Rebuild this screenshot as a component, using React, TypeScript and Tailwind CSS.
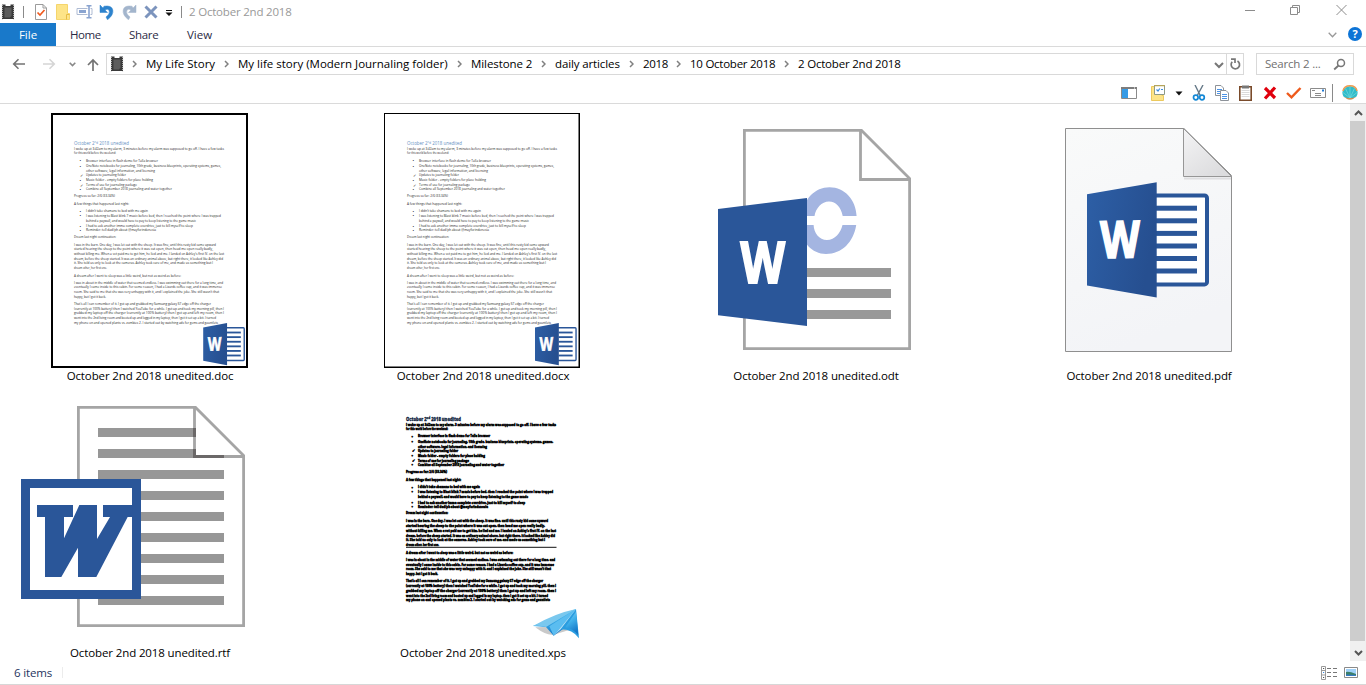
import React from "react";

type Line = [number, number, number, string, string?];

const LINES: Line[] = [
  [74, 149, 224, "I woke up at 3:42am to my alarm, 3 minutes before my alarm was supposed to go off. I have a few tasks"],
  [74, 153.3, 116, "for this world before the weekend:"],
  [86, 160.5, 158, "Browser interface in flash demo for Talla browser", "•"],
  [86, 166, 221, "OneNote notebooks for journaling, 10th grade, business blueprints, operating systems, games,", "•"],
  [86, 170.8, 155, "other software, legal information, and licensing"],
  [86, 175, 126, "Updates to journaling folder", "✓"],
  [86, 180, 153, "Music folder - empty folders for place holding", "•"],
  [86, 185, 137, "Terms of use for journaling package", "✓"],
  [86, 189, 172, "Combine all September 2018 journaling and water together", "•"],
  [74, 196, 115, "Progress so far: 2/6 (33.34%)"],
  [74, 204, 129, "A few things that happened last night:"],
  [86, 211, 148, "I didn't take shamans to bed with me again", "•"],
  [86, 215.6, 221, "I was listening to Blast blink 7 music before bed, then I reached the point where I was trapped", "•"],
  [86, 220.5, 196, "behind a paywall, and would have to pay to keep listening to the game music"],
  [86, 226, 193, "I had to ask another imma complete overdrive, just to kill myself to sleep", "•"],
  [86, 230, 156, "Reminder: tell dad/ph about @mayforindonesia", "•"],
  [74, 236.5, 116, "Dream last night continuation:"],
  [74, 244.5, 216, "I was in the barn. One day, I was let out with the sheep. It was fine, until this rusty kid came upward"],
  [74, 249, 213, "started hearing the sheep to the point where it was cut open, then head me open really badly,"],
  [74, 253.8, 224, "without killing me. When a vet paid me to get him, he lied and me. I landed on Ashley's first IV. on the last"],
  [74, 258.6, 223, "dream, before the sheep started. It was an ordinary animal above, but right there, it looked like Ashley did"],
  [74, 263.4, 213, "it. She told us only to look at the cameras. Ashley took care of me, and made us something but I"],
  [74, 268, 107, "dream other, her first one."],
  [74, 275.5, 181, "A dream after I went to sleep was a little weird, but not as weird as before:"],
  [74, 283, 223, "I was in about in the middle of water that seemed endless. I was swimming out there for a long time, and"],
  [74, 287.4, 222, "eventually I came inside to this cabin. For some reason, I had a Lizards coffee cup, and it was immense"],
  [74, 292, 219, "room. She said to me that she was very unhappy with it, and I explained the joke. She still wasn't that"],
  [74, 297, 106, "happy, but I got it back."],
  [74, 304, 211, "That's all I can remember of it. I got up and grabbed my Samsung galaxy S7 edge off the charger"],
  [74, 308.5, 224, "(currently at 100% battery) then I watched YouTube for a while. I got up and took my morning pill, then I"],
  [74, 313.2, 224, "grabbed my laptop off the charger (currently at 100% battery) then I got up and left my room, then I"],
  [74, 318, 216, "went into the 2nd living room and booted up and logged in my laptop, then I got it set up a bit. I turned"],
  [74, 322.6, 218, "my phone on and opened plants vs. zombies 2. I started out by watching ads for gems and gauntlets"],
];

function PageText({ dark = false }: { dark?: boolean }) {
  const ink = dark ? "#000" : "#1c1c1c";
  return (
    <g fontFamily="'Open Sans', 'Noto Sans', sans-serif" fontSize={dark ? 3.7 : 4.3} fill={ink}
      fontWeight={dark ? 800 : 400} stroke={dark ? "#000" : "none"} strokeWidth={dark ? 0.5 : 0}>
      <text x={74} y={145.3} textLength={55} lengthAdjust="spacingAndGlyphs" fontSize={5.4}
        fill={dark ? "#10233f" : "#5f90bf"} stroke={dark ? "#10233f" : "none"} strokeWidth={0.3}>October 2ⁿᵈ 2018 unedited</text>
      {LINES.map(([x, y, right, text, mark]) => (
        <React.Fragment key={y}>
          {mark && <text x={79.6} y={y + 1.5}>{mark}</text>}
          <text x={x} y={y + (dark ? 1.3 : 1)} textLength={right - x} lengthAdjust="spacingAndGlyphs">{text}</text>
        </React.Fragment>
      ))}
    </g>
  );
}

/* Word emblem, 122 x 115 units */
function WordMark({ id }: { id: string }) {
  return (
    <g>
      <defs>
        <linearGradient id={id} x1="0" y1="0" x2="1" y2="0.3">
          <stop offset="0" stopColor="#2d5fa6" />
          <stop offset="1" stopColor="#264f90" />
        </linearGradient>
      </defs>
      <rect x="60" y="13.2" width="60" height="89" rx="2.5" fill="#fff" stroke="#2a5699" strokeWidth="4" />
      {[26, 38.6, 51.2, 63.8, 76.3, 88.8].map((y) => (
        <rect key={y} x="69" y={y - 2.5} width="41" height="5" fill="#2a5699" />
      ))}
      <path d="M0 12 69.7 0V115.3L0 103.3Z" fill={`url(#${id})`} />
      <text x="13.5" y="75.5" fontFamily="'Open Sans', sans-serif" fontWeight="700" fontSize="51" fill="#fff"
        textLength="39.500" lengthAdjust="spacingAndGlyphs" stroke="#fff" strokeWidth="1.800" transform="rotate(-1 33 58)">W</text>
    </g>
  );
}

const Canvas = ({ children }: { children: React.ReactNode }) => (
  <svg width="300" height="263" viewBox="0 0 300 263" className="block shrink-0 overflow-visible">{children}</svg>
);

const DocThumb = () => (
  <Canvas>
    <rect x="52" y="10" width="195" height="253" fill="#fff" stroke="#000" strokeWidth="2" />
    <g transform="translate(0 -104)"><PageText /></g>
    <g transform="translate(203.2 219) scale(.342 .366)"><WordMark id="wm-doc" /></g>
  </Canvas>
);

const DocxThumb = () => (
  <Canvas>
    <path d="M51 9H247V264H51ZM52 10V262.500H245.500V10Z" fill="#000" fillRule="evenodd" />
    <g transform="translate(0 -104)"><PageText /></g>
    <g transform="translate(202 219) scale(.342 .366)"><WordMark id="wm-docx" /></g>
  </Canvas>
);

const OdtThumb = () => (
  <Canvas>
    <g transform="translate(-666 -104)">
      <path d="M744.4 130.4H861.500L909.600 178.600V348.600H744.400Z" fill="#fff" stroke="#a5a5a5" strokeWidth="2.8" />
      <path d="M860.500 130V179.500H910" fill="none" stroke="#a5a5a5" strokeWidth="2.8" />
      <path d="M802.500 216C803 199 815 187.200 829.500 187.200C845 187.200 856 200 856.600 216H842.700C841 207 836 201.500 829 201.500C821.500 201.500 816 208 814.500 216Z" fill="#a4b5e1" />
      <path d="M800 225H813.600C814 233 819 240 827 240C835 240 840.500 233 842.500 225H856.200C853.500 242 842 254 826 254C812 254 801 242 800 225Z" fill="#a4b5e1" />
      <path d="M807 268h84v9h-84zM807 289h84v9h-84zM807 310h84v9h-84z" fill="#999" />
      <path d="M718 209 807 198V326L718 315.300Z" fill="#2a5699" />
      <text x="740.5" y="282.5" fontFamily="'Open Sans', sans-serif" fontWeight="700" fontSize="57.500" fill="#fff" stroke="#fff" strokeWidth="2"
        textLength="44.500" lengthAdjust="spacingAndGlyphs">W</text>
    </g>
  </Canvas>
);

const PdfThumb = () => (
  <Canvas>
    <defs>
      <linearGradient id="pdf-page" x1="0" y1="0" x2=".3" y2="1">
        <stop offset="0" stopColor="#f9fafa" /><stop offset="1" stopColor="#f3f4f7" />
      </linearGradient>
      <linearGradient id="pdf-fold" x1="0" y1="0" x2=".7" y2="1">
        <stop offset="0" stopColor="#f4f4f5" /><stop offset="1" stopColor="#dcdcde" />
      </linearGradient>
    </defs>
    <g transform="translate(-999 -104)">
      <path d="M1065.500 128.500H1184L1231.500 175.500V351.500H1065.500Z" fill="url(#pdf-page)" stroke="#8f8f8f" />
      <path d="M1184 178.500h47" stroke="#dedee0" strokeWidth="2" />
      <path d="M1183.500 128.500V176.500H1231.500Z" fill="url(#pdf-fold)" stroke="#969696" />
      <g transform="translate(1087 182.200)"><WordMark id="wm-pdf" /></g>
    </g>
  </Canvas>
);

const RtfThumb = () => (
  <Canvas>
    <g transform="translate(0 -381)">
      <path d="M78.400 407.400H195.500L243.600 455.500V625.600H78.400Z" fill="#fff" stroke="#a5a5a5" strokeWidth="2.8" />
      <path d="M194.500 407V456.500H244" fill="none" stroke="#a5a5a5" strokeWidth="2.8" />
      <path d="M98 428h98v9h-98zM98 449h98v9h-98z" fill="#979797" />
      {[470, 491, 512, 533, 554, 575, 596].map((y) => <rect key={y} x="98" y={y} width="126" height="9" fill="#979797" />)}
      <path d="M193 428h3v9h-3zM193 449h3v6h28v3h-31z" fill="#6b6868" />
      <rect x="25.500" y="483.500" width="111" height="111" fill="#fff" stroke="#2a5699" strokeWidth="9" />
      <path transform="translate(0 395) scale(.33333)" fill="#2a5699"
        d="M111 330H219V366H192V430L238 330H291V432L330 366H309V330H398V366H383L289 546H234V458L184 546H135V366H111Z" />
    </g>
  </Canvas>
);

const XpsThumb = () => (
  <Canvas>
    <defs>
      <linearGradient id="plane" x1="0" y1="0" x2="0.4" y2="1">
        <stop offset="0" stopColor="#8fd4f5" /><stop offset=".5" stopColor="#3fb0ea" /><stop offset="1" stopColor="#1478c8" />
      </linearGradient>
    </defs>
    <g transform="translate(-1 38) scale(1 1.01) translate(0 -143.500)"><PageText dark /></g>
    <path d="M73 166.300H223.500" stroke="#111" strokeWidth="1" />
    <g transform="translate(57 149) scale(.33333)">
      <path d="M436 292Q470 318 491 314L545 298 500 290Z" fill="#c9c9c9" />
      <path d="M429 288 558 237 520 296 491 317 468 291Z" fill="url(#plane)" />
      <path d="M429 288Q495 250 558 237L468 291Q448 285 429 288Z" fill="#7ac8ee" />
      <path d="M558 237 567 325Q548 298 512 298Z" fill="#2a9de0" />
      <path d="M558 237 491 317 478 289Z" fill="#5bbdf0" />
      <path d="M558 237 491 317 512 298Z" fill="#b8e4f8" />
      <path d="M558 245 565 316Q550 296 526 292Z" fill="url(#plane)" />
    </g>
  </Canvas>
);

const FILES = [
  { name: "October 2nd 2018 unedited.doc", Thumb: DocThumb },
  { name: "October 2nd 2018 unedited.docx", Thumb: DocxThumb },
  { name: "October 2nd 2018 unedited.odt", Thumb: OdtThumb },
  { name: "October 2nd 2018 unedited.pdf", Thumb: PdfThumb },
  { name: "October 2nd 2018 unedited.rtf", Thumb: RtfThumb },
  { name: "October 2nd 2018 unedited.xps", Thumb: XpsThumb },
];

const Chip = ({ className = "" }: { className?: string }) => (
  <svg width="14" height="16" viewBox="0 0 14 16" className={`shrink-0 ${className}`}>
    <path d="M1 .5H4.500V2H9.500V.5H13V15H1Z" fill="#3a3a3a" />
    <path d="M3.500 3.500H10.500V11.500L9 13.500H3.500Z" fill="#5c5c5c" />
    <path d="M1.300 1V15.500M12.700 1V15.500" stroke="#c4c4c4" strokeWidth="1" strokeDasharray="1 1" />
  </svg>
);

const Sep = ({ className = "" }: { className?: string }) => <span className={`w-px shrink-0 bg-[#8a8a8a] ${className}`} />;

const Chevron = () => (
  <span className="flex w-[23px] shrink-0 items-center justify-center">
    <svg width="5" height="8" viewBox="0 0 5 8"><path d="M1 1 4 4 1 7" fill="none" stroke="#808080" strokeWidth="1.500" /></svg>
  </span>
);

function TitleBar() {
  return (
    <div className="flex h-[23px] items-center">
      <Chip className="ml-[1px]" />
      <Sep className="ml-[8px] h-3" />
      <svg width="14" height="16" viewBox="0 0 14 16" className="ml-[10px] shrink-0">
        <path d="M1.500.5H9L12.500 4V15.500H1.500Z" fill="#fff" stroke="#9b9b9b" /><path d="M9 .5V4h3.500" fill="none" stroke="#9b9b9b" />
        <path d="M3.500 8.500 6 11 10.500 6" fill="none" stroke="#f05a1e" strokeWidth="1.700" />
      </svg>
      <svg width="14" height="16" viewBox="0 0 14 16" className="ml-[8px] shrink-0">
        <path d="M.5.5H11.500V9.500H13.500V15.500H.5Z" fill="#fde488" stroke="#f5d56c" /><path d="M10.500 15.500V10.500H13.500" fill="none" stroke="#e7bd45" />
      </svg>
      <svg width="17" height="14" viewBox="0 0 17 14" className="ml-[6px] shrink-0">
        <path d="M11.500 3.500H1V9.500H11.500M14.500 3.500H16V9.500H14.500" fill="#fff" stroke="#aebbd3" />
        <path d="M3 5H10V8H3Z" fill="#8aa4d0" /><path d="M10.500.8H15.500M13 .8V12.800M10.500 12.800H15.500" stroke="#8aa4d0" strokeWidth="1.600" />
      </svg>
      <svg width="15" height="16" viewBox="0 0 15 16" className="ml-[6px] shrink-0">
        <path d="M1 1V8.500H8.500L6 6Q9.500 4 10.300 7T7 13L8.500 15.800Q14.800 11 13.800 6T5 2.200L4 4Z" fill="#2d83cd" stroke="#2d83cd" strokeWidth=".5" />
      </svg>
      <svg width="15" height="16" viewBox="0 0 15 16" className="ml-[8px] shrink-0">
        <path transform="matrix(-1 0 0 1 15 0)" d="M1 1V8.500H8.500L6 6Q9.500 4 10.300 7T7 13L8.500 15.800Q14.800 11 13.800 6T5 2.200L4 4Z" fill="#a3b5cc" stroke="#a3b5cc" strokeWidth=".5" />
      </svg>
      <svg width="15" height="14" viewBox="0 0 15 14" className="ml-[7px] shrink-0">
        <path d="M1.500 1.500 12.500 12.500M12.500 1.500 1.500 12.500" stroke="#7c94bd" strokeWidth="3" />
      </svg>
      <svg width="8" height="6" viewBox="0 0 8 6" className="ml-[6px] mt-[2px] shrink-0">
        <path d="M1 0H7V1H1ZM.5 2.500H7.500L4 6Z" fill="#111" />
      </svg>
      <Sep className="ml-[8px] h-3" />
      <span className="ml-[7px] tracking-[-0.2px] text-[#999]">2 October 2nd 2018</span>
      <svg width="102" height="12" viewBox="0 0 102 12" className="ml-auto mr-[19px] shrink-0 -translate-y-[2px]" fill="none" stroke="#8c8c8c">
        <path d="M0 6.500H10" /><path d="M45.500 3.500H52.500V10.500H45.500ZM47.500 3.500V1.500H54.500V8.500H52.500" /><path d="M91.500 1 101.500 11M101.500 1 91.500 11" />
      </svg>
    </div>
  );
}

function Tabs() {
  return (
    <div className="flex h-[24px] items-center border-b border-[#dadada] text-[#2b2b45]">
      <div className="flex h-[23px] w-[56px] items-center justify-center bg-[#1979ca] text-white">File</div>
      <div className="ml-[14px] w-[59px] tracking-[-0.4px]">Home</div>
      <div className="w-[58px] tracking-[-0.3px]">Share</div>
      <div>View</div>
      <svg width="9" height="6" viewBox="0 0 9 6" className="ml-auto mr-[11px]"><path d="M.7.7 4.500 4.700 8.300.7" fill="none" stroke="#999" strokeWidth="1.300" /></svg>
      <span className="mr-[4px] flex size-[14px] -translate-y-px items-center justify-center rounded-full bg-[#0d74d6] text-[11px] font-bold leading-none text-white">?</span>
    </div>
  );
}

const CRUMBS: [string, string][] = [
  ["My Life Story", "w-[69px]"],
  ["My life story (Modern Journaling folder)", "w-[210px]"],
  ["Milestone 2", "w-[61px] tracking-[-0.08px]"],
  ["daily articles", "w-[65px] tracking-[-0.12px]"],
  ["2018", "w-[24px] tracking-[-0.3px]"],
  ["10 October 2018", "w-[85px] tracking-[-0.25px]"],
  ["2 October 2nd 2018", "w-[102px] tracking-[-0.2px]"],
];

function AddressBar() {
  return (
    <div className="flex h-[34px] items-center">
      <svg width="14" height="12" viewBox="0 0 14 12" className="ml-[12px] shrink-0"><path d="M13 6H2M6.500 1.200 1.700 6 6.500 10.800" fill="none" stroke="#737373" strokeWidth="1.600" /></svg>
      <svg width="14" height="12" viewBox="0 0 14 12" className="ml-[16px] shrink-0"><path d="M1 6H12M7.500 1.200 12.300 6 7.500 10.800" fill="none" stroke="#d5d5d5" strokeWidth="1.600" /></svg>
      <svg width="7" height="5" viewBox="0 0 7 5" className="ml-[13px] shrink-0"><path d="M.7.7 3.500 3.500 6.300.7" fill="none" stroke="#888" strokeWidth="1.600" /></svg>
      <svg width="14" height="13" viewBox="0 0 14 13" className="ml-[10px] shrink-0"><path d="M7 13V2M2 7 7 2 12 7" fill="none" stroke="#737373" strokeWidth="1.700" /></svg>
      <div className="ml-[6px] flex h-[22px] w-[1138px] shrink-0 items-center border border-[#d9d9d9]">
        <Chip className="ml-[3px]" />
        {CRUMBS.map(([label, cls], i) => (
          <React.Fragment key={label}>
            {i === 0 ? <span className="-ml-px flex"><Chevron /></span> : <Chevron />}
            <span className={`shrink-0 whitespace-nowrap ${cls}`}>{label}</span>
          </React.Fragment>
        ))}
        <svg width="10" height="7" viewBox="0 0 10 7" className="ml-auto mr-[2px] mt-[2px]"><path d="M1 1 5 5 9 1" fill="none" stroke="#777" strokeWidth="2" /></svg>
        <span className="flex h-full w-[17px] items-center justify-center border-l border-[#d9d9d9]">
          <svg width="11" height="12" viewBox="0 0 11 12"><path d="M2.200 3.800A4.200 4.200 0 1 0 7.500 3M1 1.200H5V5" fill="none" stroke="#777" strokeWidth="1.700" /></svg>
        </span>
      </div>
      <div className="ml-[12px] flex h-[22px] w-[98px] shrink-0 items-center border border-[#d9d9d9] pl-[8px] text-[#707070]">
        <span className="whitespace-nowrap tracking-[-0.2px]">Search 2 ...</span>
        <svg width="13" height="13" viewBox="0 0 13 13" className="ml-auto mr-[7px]"><circle cx="8" cy="5" r="3.500" fill="none" stroke="#777" strokeWidth="1.500" /><path d="M5.500 7.500 1.200 11.500" stroke="#777" strokeWidth="1.800" /></svg>
      </div>
    </div>
  );
}

function Toolbar() {
  return (
    <div className="flex h-[23px] items-center justify-end border-b border-[#dadada] pr-[8px] pt-[2px]">
      <svg width="16" height="12" viewBox="0 0 16 12"><path d="M.5.5H15.500V11.500H.5Z" fill="#fff" stroke="#8a8a8a" /><path d="M0 0H16V2H0Z" fill="#7d7d7d" /><path d="M1 2H7V11H1Z" fill="#369be6" /><path d="M13 .5h1v1h-1z" fill="#fff" /></svg>
      <svg width="15" height="16" viewBox="0 0 15 16" className="ml-[14px]"><path d="M.5 1.500H11V10.500H12.500V15.500H.5Z" fill="#fde488" stroke="#ecc95d" /><path d="M3.500.5H13.500V9.500H3.500Z" fill="#fff" stroke="#8e9a86" /><path d="M3 .5H14" stroke="#b5a55a" strokeWidth="1.500" /><path d="M5.500 4.500 7 6 8.800 3.500M10 4.500H12" fill="none" stroke="#3b8de0" strokeWidth="1.200" /></svg>
      <svg width="8" height="5" viewBox="0 0 8 5" className="ml-[9px]"><path d="M.5.500H7.500L4 4.500Z" fill="#111" /></svg>
      <svg width="14" height="16" viewBox="0 0 14 16" className="ml-[9px]"><path d="M3 0 8.500 11M11 0 5 11" stroke="#667988" strokeWidth="1.400" /><circle cx="3.800" cy="12.500" r="2.300" fill="none" stroke="#1388d6" strokeWidth="1.700" /><circle cx="10" cy="12.500" r="2.300" fill="none" stroke="#1388d6" strokeWidth="1.700" /></svg>
      <svg width="15" height="16" viewBox="0 0 15 16" className="ml-[9px]"><path d="M.5.500H6L8.500 3V10.500H.5Z" fill="#fff" stroke="#8d9299" /><path d="M2 4.500H7M2 6.500H7M2 8.500H7" stroke="#4c93e6" /><path d="M5.500 5.500H11L13.500 8V15.500H5.500Z" fill="#fff" stroke="#8d9299" /><path d="M7 9.500H12M7 11.500H12M7 13.500H12" stroke="#4c93e6" /></svg>
      <svg width="13" height="16" viewBox="0 0 13 16" className="ml-[9px]"><path d="M.8 1.800H12.200V15.200H.8Z" fill="#fff" stroke="#7a4b2b" strokeWidth="1.600" /><path d="M3 .5H10V3.500H3Z" fill="#777" /><path d="M2.500 5.500h8M2.500 7.500h8M2.500 9.500h8M2.500 11.500h8" stroke="#dadada" /></svg>
      <svg width="14" height="14" viewBox="0 0 14 14" className="ml-[11px]"><path d="M2 2 12 12M12 1.500 2 12.500" stroke="#e0000d" strokeWidth="3.200" /></svg>
      <svg width="16" height="12" viewBox="0 0 16 12" className="ml-[9px]"><path d="M1 6 5.500 10.300 14.500 1" fill="none" stroke="#ee5a1c" strokeWidth="2.400" /></svg>
      <svg width="16" height="12" viewBox="0 0 16 12" className="ml-[8px]"><path d="M.5 1.500H15.500V10.500H.5Z" fill="#fff" stroke="#8b8b8b" /><path d="M12 2.500H14V4.500H12Z" fill="#1d78d4" /><path d="M2 3.500H5M5 6.500H11M5 8.500H11" stroke="#8b8b8b" /></svg>
      <Sep className="ml-[6px] h-[18px]" />
      <svg width="16" height="16" viewBox="0 0 16 16" className="ml-[9px]">
        <path d="M8 14.500 5 13.500 1.500 11.500Q-1 7 2 3.800 5 1 8 1T14 3.800Q17 7 14.500 11.500L11 13.500Z" fill="#31bcc9" />
        <path d="M1 6Q2 .8 8 .8T15 6" fill="none" stroke="#ef9b50" strokeWidth="1.500" />
        <path d="M8 13 1 7.500M8 13 3.500 3.500M8 13V1.500M8 13 12.500 3.500M8 13 15 7.500" stroke="#7fdde0" strokeWidth=".6" />
        <path d="M2 12 6 14.500H10L14 12 10 13H6Z" fill="#d98b4d" />
      </svg>
    </div>
  );
}

export default function App() {
  return (
    <div className="flex h-[685px] w-[1366px] flex-col overflow-hidden bg-white font-['Open_Sans','Noto_Sans',sans-serif] text-[11.5px] leading-[18px] text-black">
      <TitleBar />
      <Tabs />
      <AddressBar />
      <Toolbar />
      <div className="flex h-[557px] shrink-0">
        <main className="grid flex-1 grid-cols-[repeat(4,300px)] grid-rows-[277px_277px] gap-x-[33px]">
          {FILES.map(({ name, Thumb }) => (
            <figure key={name} className="flex h-[277px] flex-col items-center">
              <Thumb />
              <figcaption className="whitespace-nowrap leading-[18px] tracking-[-0.12px]">{name}</figcaption>
            </figure>
          ))}
        </main>
        <div className="flex w-[16px] flex-col bg-[#f0f0f0]">
          <div className="flex h-[17px] items-center justify-center"><svg width="9" height="6" viewBox="0 0 9 6"><path d="M1 5 4.500 1.500 8 5" fill="none" stroke="#555" strokeWidth="2" /></svg></div>
          <div className="h-[520px] w-[15px] bg-[#cdcdcd]" />
          <div className="flex h-[20px] items-center justify-center pt-[3px]"><svg width="9" height="6" viewBox="0 0 9 6"><path d="M1 1 4.500 4.500 8 1" fill="none" stroke="#555" strokeWidth="2" /></svg></div>
        </div>
      </div>
      <div className="flex h-[24px] shrink-0 items-center border-b border-[#d7d7d7] pl-[14px] pr-[7px] text-[#1f3560]">
        <span className="w-[48px] tracking-[-0.15px]">6 items</span>
        <span className="h-[11px] w-px bg-[#ececec]" />
        <svg width="17" height="14" viewBox="0 0 17 14" className="ml-auto">
          <path d="M.5.500H4.500V13.500H.5ZM.5 4.500h4M.5 9h4" fill="#fff" stroke="#999" /><path d="M2 2.500h1.200M2 11.500h1.200" stroke="#555" /><path d="M2 6.500h1.200" stroke="#3b8de0" />
          <path d="M6 2.500H10M12 2.500H16M6 6.500H10M12 6.500H16M6 10.500H10M12 10.500H16" stroke="#777" />
        </svg>
        <svg width="15" height="12" viewBox="0 0 15 12" className="ml-[6px]"><path d="M.5.500H13.500V10.500H.5Z" fill="#fff" stroke="#8a8a8a" /><path d="M2 2H12V9H2Z" fill="#9fd0f8" /><path d="M2 5Q5 4 12 7V9H2Z" fill="#3c7f6a" /><path d="M2 7.500 12 8V9H2Z" fill="#3579c4" /></svg>
      </div>
    </div>
  );
}
